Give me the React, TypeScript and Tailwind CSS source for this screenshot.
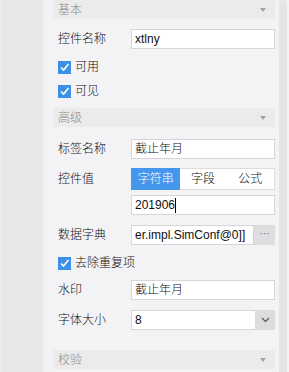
import React from "react";

const font = "font-['Liberation_Sans','Noto_Sans_CJK_SC',sans-serif] font-light";

function SectionHeader({ title }: { title: string }) {
  return (
    <div className="h-[19px] bg-[#ebebeb] flex items-center justify-between pl-[5px] pr-[9px]">
      <span className="text-[12px] text-[#8a8a8a] leading-none">{title}</span>
      <svg width="6" height="4" viewBox="0 0 6 4">
        <path d="M0 0 L6 0 L3 4 Z" fill="#a3a3a3" />
      </svg>
    </div>
  );
}

function Check({ label }: { label: string }) {
  return (
    <div className="h-[24px] flex items-center pl-[5px] gap-[4px]">
      <span className="w-[13px] h-[13px] bg-[#3c91e6] flex items-center justify-center">
        <svg width="11" height="11" viewBox="0 0 11 11">
          <path d="M2 5.5 L4.5 8 L9.5 2" fill="none" stroke="#fff" strokeWidth="1.6" />
        </svg>
      </span>
      <span className="text-[12px] text-[#111]">{label}</span>
    </div>
  );
}

function FieldRow({ label, children, className = "" }: { label: string; children: React.ReactNode; className?: string }) {
  return (
    <div className={`flex items-center h-[20px] ${className}`}>
      <span className="w-[78px] shrink-0 pl-[5px] text-[12px] text-[#111]">{label}</span>
      <div className="flex-1 h-full">{children}</div>
    </div>
  );
}

function TextBox({ value }: { value: string }) {
  return (
    <div className="h-full border border-[#d6d6d8] bg-white px-[3px] flex items-center text-[12px] text-[#111] overflow-hidden whitespace-nowrap">
      {value}
    </div>
  );
}

export default function App() {
  return (
    <div className={`flex w-[289px] h-[372px] overflow-hidden bg-[#f3f3f6] ${font}`}>
      <div className="w-[43px] shrink-0 bg-[#e8e8e8] border-l-2 border-[#f0ebe2]" />

      <div className="w-[236px] shrink-0 pl-[10px] pr-[4px]">
        <SectionHeader title="基本" />

        <FieldRow label="控件名称" className="mt-[10px]">
          <TextBox value="xtlny" />
        </FieldRow>

        <div className="mt-[6px]">
          <Check label="可用" />
          <Check label="可见" />
        </div>

        <div className="mt-[5px]">
          <SectionHeader title="高级" />
        </div>

        <FieldRow label="标签名称" className="mt-[12px]">
          <TextBox value="截止年月" />
        </FieldRow>

        <div className="flex mt-[9px]">
          <span className="w-[78px] shrink-0 pl-[5px] pt-[2px] text-[12px] text-[#111]">控件值</span>
          <div className="flex-1">
            <div className="h-[22px] border border-[#dcdcdf] bg-white grid grid-cols-3 text-[12px]">
              <span className="bg-[#4597ee] text-white flex items-center justify-center -m-px">字符串</span>
              <span className="flex items-center justify-center text-[#111]">字段</span>
              <span className="flex items-center justify-center text-[#111]">公式</span>
            </div>
            <div className="h-[20px] mt-[5px] border border-[#d6d6d8] bg-white px-[3px] flex items-center text-[12px] text-[#111]">
              201906
              <span className="w-px h-[15px] bg-black" />
            </div>
          </div>
        </div>

        <FieldRow label="数据字典" className="mt-[10px]">
          <div className="h-full flex">
            <div className="flex-1 border border-[#d6d6d8] bg-white px-[3px] flex items-center text-[12px] text-[#111] overflow-hidden whitespace-nowrap">
              er.impl.SimConf@0]]
            </div>
            <div className="w-[21px] bg-[#dedee0] flex items-center justify-center text-[10px] text-[#666] leading-none pb-[3px]">
              ···
            </div>
          </div>
        </FieldRow>

        <div className="mt-[6px]">
          <Check label="去除重复项" />
        </div>

        <FieldRow label="水印" className="mt-[5px]">
          <TextBox value="截止年月" />
        </FieldRow>

        <FieldRow label="字体大小" className="mt-[10px]">
          <div className="h-full flex">
            <div className="flex-1 border border-[#d6d6d8] border-r-0 bg-white px-[3px] flex items-center text-[12px] text-[#111]">
              8
            </div>
            <div className="w-[20px] bg-[#dcdcdf] flex items-center justify-center">
              <svg width="9" height="6" viewBox="0 0 9 6">
                <path d="M1 1 L4.5 4.5 L8 1" fill="none" stroke="#555" strokeWidth="1.2" />
              </svg>
            </div>
          </div>
        </FieldRow>

        <div className="mt-[20px]">
          <SectionHeader title="校验" />
        </div>
      </div>

      <div className="w-[8px] shrink-0 bg-[#e5e5e7] rounded-t-[4px]" />
    </div>
  );
}
